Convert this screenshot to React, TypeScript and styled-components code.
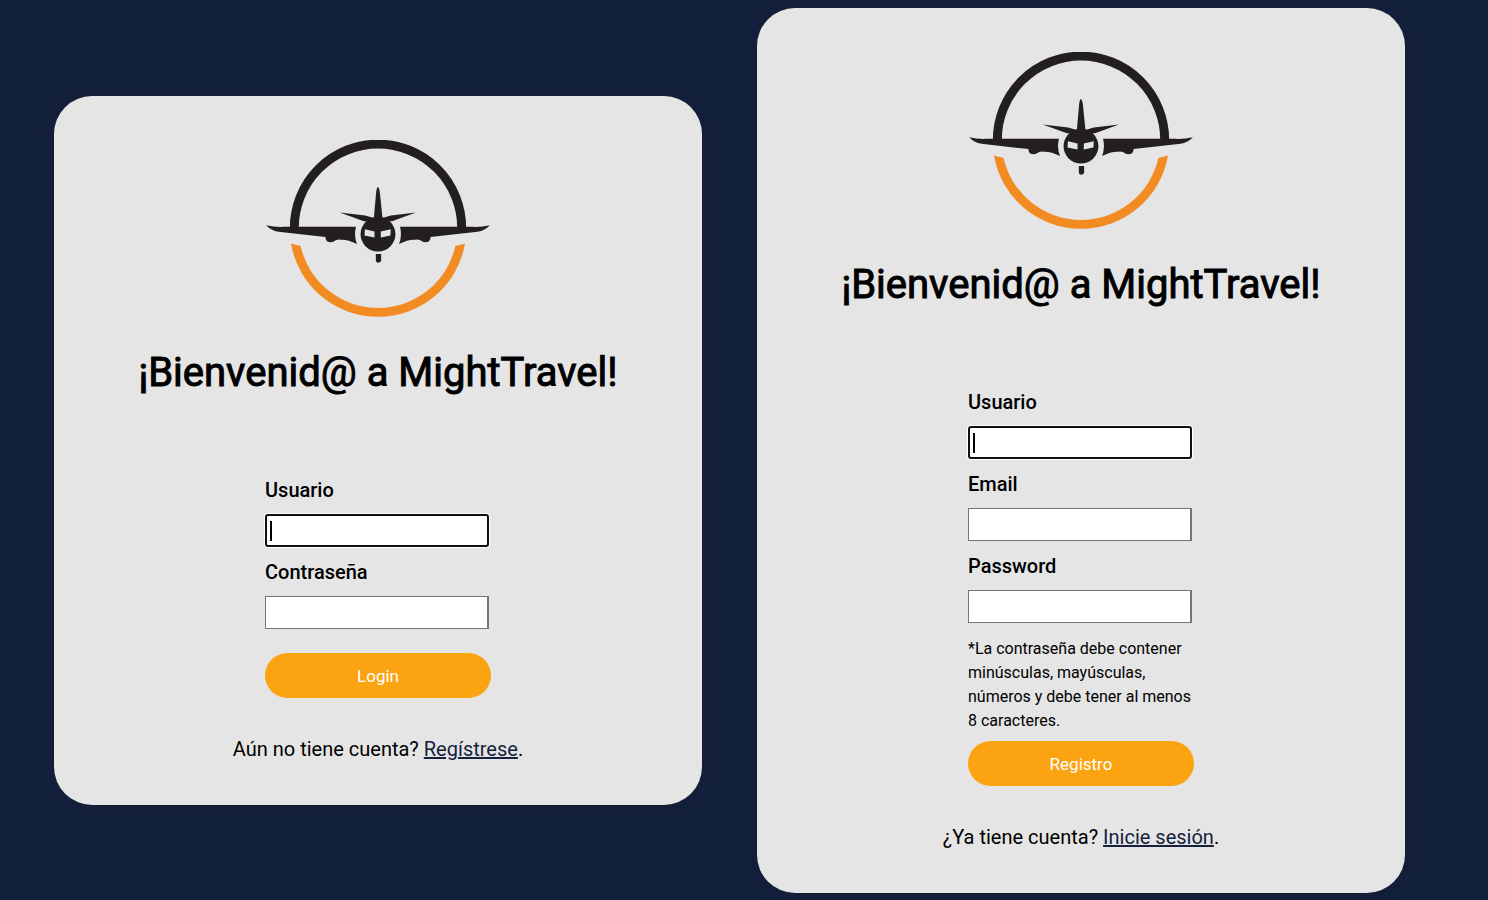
import React from "react";
import styled, { createGlobalStyle, css } from "styled-components";

const GlobalStyle = createGlobalStyle`
  *, *::before, *::after { box-sizing: border-box; }
  body {
    margin: 0;
    background: #14213d;
    color: #000;
    font-family: Roboto, "Liberation Sans", sans-serif;
    font-size: 20px;
  }
`;

const Page = styled.main`
  display: grid;
  grid-template-columns: 1fr 1fr;
  align-items: center;
  gap: 55px;
  min-height: 100vh;
  padding: 8px 83px 7px 54px;
`;

const Card = styled.section`
  display: flex;
  flex-direction: column;
  align-items: center;
  padding: 44px 24px 41px;
  border-radius: 38px;
  background: #e5e5e5;
  box-shadow: 0 0 16px rgba(20, 20, 40, 0.4);
`;

const LogoArt = styled.svg`
  display: block;
  width: 226px;
  height: 177px;
`;

const Title = styled.h1`
  margin: 32px 0 81px;
  font-size: 40px;
  line-height: 48px;
  font-weight: 400;
  -webkit-text-stroke: 1px #000;
  text-align: center;
`;

const Form = styled.form`
  display: flex;
  flex-direction: column;
  width: 226px;
`;

const Fields = styled.div`
  display: flex;
  flex-direction: column;
  gap: 13px;
`;

const Field = styled.div`
  display: flex;
  flex-direction: column;
  gap: 12px;
`;

const Label = styled.label`
  line-height: 24px;
  font-weight: 500;
`;

const Input = styled.input<{ $active?: boolean }>`
  width: 224px;
  height: 33px;
  padding: 1px 4px;
  border: 1px solid #767676;
  border-right-width: 2px;
  border-radius: 0;
  background: #fff;
  font: inherit;
  outline: none;
  ${({ $active }) =>
    $active &&
    css`
      border: 2px solid #101010;
      border-radius: 3px;
      box-shadow: 0 0 0 1px #fff;
      background: linear-gradient(#000, #000) 3px center / 2px 20px no-repeat #fff;
    `}
`;

const Hint = styled.p`
  margin: 14px 0 0;
  font-size: 16px;
  line-height: 24px;
`;

const Submit = styled.button<{ $gap: number }>`
  height: 45px;
  margin-top: ${({ $gap }) => $gap}px;
  border: 0;
  border-radius: 24px;
  background: #fca311;
  color: #fff;
  font-family: inherit;
  font-size: 17px;
  cursor: pointer;
`;

const Switch = styled.p`
  margin: 36px 0 0;
  line-height: 30px;
`;

const Link = styled.a`
  color: #14213d;
  text-decoration: underline;
`;

const Wing = () => (
  <path d="M45 284 Q70 290 96 289 L316 289 Q309 315 319 341 Q292 327 270 328 Q257 326 249 333 Q240 338 229 333 Q223 328 224 320 L82 304 Q60 300 45 284Z" />
);

const Logo = () => (
  <LogoArt viewBox="45 27 675 534" role="img" aria-label="MightTravel">
    <path d="M130 292 A252 252 0 0 1 635 292" fill="none" stroke="#231f20" strokeWidth="27" />
    <path d="M120 339 A266.3 266.3 0 0 0 645 339 L616 347 A239.4 239.4 0 0 1 149 347Z" fill="#f38b23" />
    <g fill="#231f20">
      <Wing />
      <g transform="matrix(-1 0 0 1 765 0)">
        <Wing />
      </g>
      <path d="M382 169 Q386 170 388 184 L396 262 L421 255 L497 246 L425 272 L340 272 L267 246 L344 255 L370 262 L377 184 Q379 170 382 169Z" />
      <circle cx="382.5" cy="311" r="52.5" />
      <path d="M376 371 H392 V390 Q391 397 384 397 Q376 397 376 390Z" />
    </g>
    <g fill="#e5e5e5">
      <path d="M343 296 L372 303 V321 L342 315Z" />
      <path d="M421 296 L391 303 V321 L420 315Z" />
    </g>
  </LogoArt>
);

interface FieldSpec {
  id: string;
  label: string;
  type: string;
  active?: boolean;
}

interface AccessCardProps {
  fields: FieldSpec[];
  hint?: string;
  action: string;
  question: string;
  link: string;
}

const AccessCard = ({ fields, hint, action, question, link }: AccessCardProps) => (
  <Card>
    <Logo />
    <Title>¡Bienvenid@ a MightTravel!</Title>
    <Form onSubmit={(e) => e.preventDefault()}>
      <Fields>
        {fields.map((f) => (
          <Field key={f.id}>
            <Label htmlFor={f.id}>{f.label}</Label>
            <Input id={f.id} type={f.type} $active={f.active} />
          </Field>
        ))}
      </Fields>
      {hint && <Hint>{hint}</Hint>}
      <Submit type="submit" $gap={hint ? 8 : 24}>
        {action}
      </Submit>
    </Form>
    <Switch>
      {question} <Link href="#">{link}</Link>.
    </Switch>
  </Card>
);

export default function App() {
  return (
    <>
      <GlobalStyle />
      <Page>
        <AccessCard
          fields={[
            { id: "login-user", label: "Usuario", type: "text", active: true },
            { id: "login-password", label: "Contraseña", type: "password" },
          ]}
          action="Login"
          question="Aún no tiene cuenta?"
          link="Regístrese"
        />
        <AccessCard
          fields={[
            { id: "register-user", label: "Usuario", type: "text", active: true },
            { id: "register-email", label: "Email", type: "email" },
            { id: "register-password", label: "Password", type: "password" },
          ]}
          hint="*La contraseña debe contener minúsculas, mayúsculas, números y debe tener al menos 8 caracteres."
          action="Registro"
          question="¿Ya tiene cuenta?"
          link="Inicie sesión"
        />
      </Page>
    </>
  );
}
